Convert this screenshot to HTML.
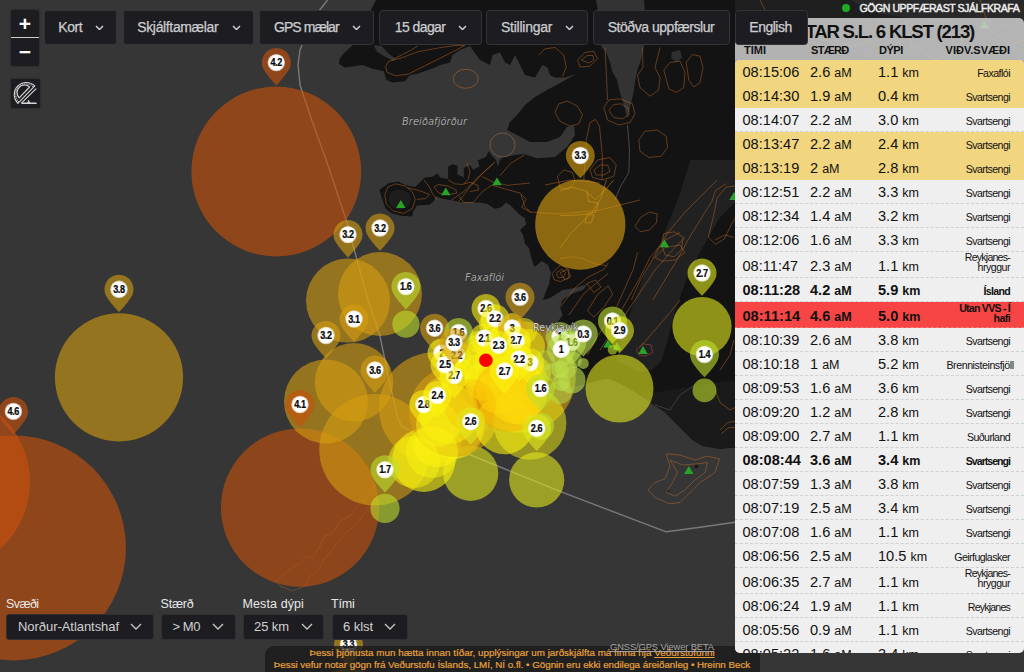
<!DOCTYPE html>
<html lang="is"><head><meta charset="utf-8"><title>Skjálftar</title>
<style>
html,body{margin:0;padding:0;}
body{width:1024px;height:672px;overflow:hidden;background:#363636;font-family:"Liberation Sans",sans-serif;position:relative;}
#map{position:absolute;left:0;top:0;width:1024px;height:672px;}
.btn{z-index:4;position:absolute;top:10px;height:35px;box-sizing:border-box;background:#1d1d21;border:1px solid #333338;border-radius:3.5px;color:#cdcdd0;font-size:14px;line-height:32px;white-space:nowrap;-webkit-text-stroke:0.25px #cdcdd0;}
.btn span{position:absolute;top:0;}
.btn svg{position:absolute;top:13.5px;}
.zoom{position:absolute;left:11px;top:10px;width:28px;height:56px;background:#1d1d21;border-radius:2px;box-shadow:0 0 2px rgba(0,0,0,.5);}
.zoom div{position:absolute;left:0;width:28px;height:28px;color:#fff;text-align:center;font-weight:bold;}
.zoom .ln{position:absolute;left:0;top:27px;width:28px;height:1px;background:#ccc;}
.meas{position:absolute;left:11px;top:79px;width:29px;height:29px;background:#1d1d21;border-radius:2px;box-shadow:0 0 2px rgba(0,0,0,.5);}
.lbl{position:absolute;top:596px;color:#e8e8e8;font-size:12.5px;line-height:16px;white-space:nowrap;}
.sel{position:absolute;top:614px;height:26px;box-sizing:border-box;background:#1d1d21;border:1px solid #2e2e33;border-radius:3px;color:#d0d0d2;font-size:13px;line-height:24px;white-space:nowrap;}
.sel span{position:absolute;top:0;}
.sel svg{position:absolute;top:8px;}
#panel{z-index:2;position:absolute;left:735px;top:18px;width:289px;height:635px;background:rgba(205,205,205,0.86);border-radius:5px;overflow:hidden;color:#111;}
#panel h2{position:absolute;margin:0;right:50px;top:1.9px;font-size:18.6px;line-height:24px;font-weight:bold;white-space:nowrap;letter-spacing:0px;}
.hd{position:absolute;top:24.9px;font-size:11px;line-height:14px;font-weight:bold;white-space:nowrap;}
#list{position:absolute;left:0;top:41.9px;width:289px;background:#efefef;border-radius:5px 5px 0 0;overflow:hidden;}
.row{position:relative;height:24px;box-sizing:border-box;border-bottom:1px dashed #d0d0d0;font-size:14.6px;line-height:24px;white-space:nowrap;}
.row.two{height:26.2px;line-height:28px;}
.row.y{background:#f2d57f;border-bottom-color:#f2d57f;}
.row.r{background:#f74545;border-bottom-color:#f77;}
.row.b{font-weight:bold;}
.row span{position:absolute;top:0;}
.row i{font-style:normal;font-size:12.5px;}
.row .t{left:7.5px;}
.row .m{left:75px;}
.row .d{left:143px;}
.row .a{right:14px;font-size:10.6px;text-align:right;top:1px;}
.row .a b{display:block;font-weight:inherit;}
.row.two .a{line-height:9.7px;top:1.1px;}
#status{position:absolute;left:859.5px;top:1.5px;font-size:10.6px;line-height:13px;color:#eee;-webkit-text-stroke:0.45px #eee;white-space:nowrap;}
#dot{position:absolute;left:842px;top:4px;width:8px;height:8px;border-radius:50%;background:#1faa1f;}
#foot{position:absolute;left:264.5px;top:645.5px;width:495px;height:40px;background:rgba(28,28,28,0.82);border-radius:9px;color:#e9a23b;font-size:9.8px;line-height:11.7px;text-align:center;white-space:nowrap;padding-top:1.7px;box-sizing:border-box;-webkit-text-stroke:0.2px #e9a23b;}
#foot u{text-decoration:underline;}
#gnss{position:absolute;left:610px;top:639.8px;font-size:9.4px;z-index:3;color:#a4a4a4;white-space:nowrap;line-height:13px;text-decoration:underline;}
</style></head><body>
<svg id="map" width="1024" height="672" viewBox="0 0 1024 672">
<rect width="1024" height="672" fill="#363636"/>
<polygon points="376,0 372,8 365,20 358,35 352,46 345,52 340,58 338.75,63.75 345,67.5 362.5,65 372.5,68.75 383.75,71.25 386.25,80 392.5,82.5 405,81.25 410,75 417.5,73.75 435,67.5 440,65 450,62.5 452.5,55 460,50 470,46 474,52 480,60 490,65 492.5,55 500,52.5 505,62.5 510,65 515,55 520,65 525,75 535,77.5 542.5,65 547.5,67.5 550,75 555,77.5 565,77.5 576,74 562,82 547,90 535,97 525,105 517,115 510,122 507,130 517,135 530,142 547,142 560,137 567,127 574,126 575,135 567,147 555,157 537,158.3 530,156 524.7,154.1 516.9,154.8 502.8,157.2 499.7,160.3 498,167 496,160 491.9,155.6 488.8,150.9 485.6,157.2 477.8,160.3 479.4,166.6 473.1,169.7 470,165 463.8,168.1 463.8,177.5 457.5,174.4 457.5,165.8 452.8,164.2 448.1,166.6 448.1,179.1 440.3,177.5 437.2,173.6 432.5,176.7 424.7,177.5 420,182.2 415.3,186.9 405.9,185.3 398.1,181.4 388.8,183 379.4,190 381.7,197.8 385.6,208.75 391.9,213.4 401.25,215.8 412.2,216.6 413,211.9 416.9,205.6 429.4,204.8 434,201 435.6,196.25 441.9,198.6 451.25,200.2 463.75,202.5 479.4,202.5 487.2,204 495,208.75 501.25,207.2 505.9,202.5 510.6,205.6 515.3,210.3 520,215 524.7,218.1 526.25,224.4 520,230 523,235 525,244 529,248 531,256.7 534.4,267 541.7,261 548,265 551,273 549,284 545,294 543,300 550,298 562.5,290 575,288 587.5,284 583,290 571,294 562.5,300 560,307 562.5,315 558,322 552,326 556,333 565,338 560,346 550,350 540,353 525,352 512,355 500,352 492,356 484,362 478,372 476,382 482,390 495,396 510,393 525,396 540,396 555,392 570,388 585,384 600,380 608.75,379 619,383 630,389 640,395.8 652.5,403 665,412.5 680,427.5 692.5,440 702.5,446 720,449 735,447.5 760,452 800,470 850,480 1024,470 1024,0" fill="#131313" />
<polygon points="596,0 600,25 601,46 606,52 610,62 612,71 617,80 620,93 624.6,107 627,118 630,107 633.5,93 635,82 637,71 641,60 644,46 646,25 644,0" fill="#333333" />
<polygon points="672,52 680,50 682,58 676,62 671,58" fill="#2f2f2f" />
<circle cx="696.5" cy="466.5" r="2" fill="#1a1a1a"/><circle cx="668" cy="491" r="1.2" fill="#1a1a1a"/>
<polygon points="690.4,160 679.3,195.7 661.4,240.4 643.6,276 632.4,307.3 621.3,338.6 616.8,360.9 640,372 652.5,369.8 661.4,360.9 668.1,338.6 674.8,311.8 686,280.5 701.6,249.3 719.5,218 737.3,200 737.3,160" fill="#212121" />
<polygon points="640,395 700,385 737,380 737,447 720,448.5 702.5,445.5 692.5,439.5 680,427 665,412 652.5,404.5" fill="#1a1a1a" />
<ellipse cx="399.7" cy="199.4" rx="11" ry="10" fill="#1e1e1e"/>
<polygon points="735,0 1024,0 1024,60 900,70 820,40 760,30 735,12" fill="#1e1e1e" />
<polygon points="850,0 1024,0 1024,30 940,22 880,14" fill="#292929" />
<polygon points="373.9,45.5 381.2,45.5 388.6,53.7 395.4,58.6 392.5,60.5 384.7,56.6 376.9,51.7" fill="#333333" />
<path d="M385.7 66.4 L387 72.2 L395.4 75.7 L408.1 74.2 L421.8 67.3 L439.4 58.6 L455 50.7 L464.8 45.5 L455 45.5 L439.4 47.8 L417.9 51.7 L402.3 57.6 L388.6 61.5 Z" fill="none" stroke="rgba(205,112,40,0.55)" stroke-width="0.8" stroke-linejoin="round"/>
<path d="M392.5 59.5 L408.1 51.7 L417.9 45.9" fill="none" stroke="rgba(205,112,40,0.55)" stroke-width="0.8" stroke-linejoin="round"/>
<ellipse cx="465.75" cy="78.75" rx="12.5" ry="9.5" transform="rotate(0 465.75 78.75)" fill="none" stroke="rgba(205,112,40,0.55)" stroke-width="0.9"/>
<ellipse cx="502.5" cy="145" rx="12.5" ry="12" transform="rotate(0 502.5 145)" fill="none" stroke="rgba(190,120,80,0.5)" stroke-width="0.9"/>
<path d="M555 112.5 L558.8 103.8 L567.5 101.2 L577.5 106.2 L582.5 115 L578.8 123.8 L570 126.2 L560 121.2 Z" fill="none" stroke="rgba(205,112,40,0.55)" stroke-width="0.8" stroke-linejoin="round"/>
<path d="M538.8 55 L545 48.8 L555 47.5 L563.8 55 L566.2 67.5 L562.5 76.2" fill="none" stroke="rgba(205,112,40,0.55)" stroke-width="0.8" stroke-linejoin="round"/>
<path d="M577.5 60 L585 52.5 L593.8 51.2 L597.5 58.8 L590 66.2 L580 67 Z" fill="none" stroke="rgba(205,112,40,0.55)" stroke-width="0.8" stroke-linejoin="round"/>
<path d="M581.2 60 L587.5 55.5 L593 55.5 L593.8 60 L588.8 63 Z" fill="none" stroke="rgba(205,112,40,0.55)" stroke-width="0.8" stroke-linejoin="round"/>
<path d="M605 47.5 L606.2 70 L607.5 100" fill="none" stroke="rgba(205,112,40,0.55)" stroke-width="0.8" stroke-linejoin="round"/>
<path d="M603.8 107.5 L608.8 100 L620 98.8 L632.5 103.8 L635 113.8 L630 122.5 L618.8 125 L607.5 120 Z" fill="none" stroke="rgba(205,112,40,0.55)" stroke-width="0.8" stroke-linejoin="round"/>
<path d="M608.8 110 L613.8 104.5 L621.2 103.8 L628.8 108.8 L628.8 115 L622.5 118.8 L613.8 117.5 Z" fill="none" stroke="rgba(205,112,40,0.55)" stroke-width="0.8" stroke-linejoin="round"/>
<path d="M583.8 180 L586.2 140 L590 122.5 L595.5 119.5 L599.5 126.2 L602.5 157.5 L602 180" fill="none" stroke="rgba(205,112,40,0.55)" stroke-width="0.8" stroke-linejoin="round"/>
<path d="M638.8 140 L645 131.2 L657.5 130 L666.2 136.2 L667.5 147.5 L661.2 156.2 L648.8 157.5 L640 151.2 Z" fill="none" stroke="rgba(205,112,40,0.55)" stroke-width="0.8" stroke-linejoin="round"/>
<path d="M642.5 47.5 L643 67.5 L637.5 75 L640 87.5 L650 96.2 L658.8 90 L660 77.5 L655 67.5 L660 47.5" fill="none" stroke="rgba(205,112,40,0.55)" stroke-width="0.8" stroke-linejoin="round"/>
<path d="M663.8 70 L670 62.5 L680 61.2 L685 72.5 L683.8 87.5 L676.2 92.5 L668.8 88.8 Z" fill="none" stroke="rgba(205,112,40,0.55)" stroke-width="0.8" stroke-linejoin="round"/>
<path d="M686.2 62.5 L692.5 54.5 L700 56.2 L703 67.5 L700 82.5 L693.8 87 L688.8 80 Z" fill="none" stroke="rgba(205,112,40,0.55)" stroke-width="0.8" stroke-linejoin="round"/>
<path d="M590 170 L597.5 160 L610 157.5 L616.2 165 L613.8 176.2 L602.5 180 L592.5 177.5 Z" fill="none" stroke="rgba(205,112,40,0.55)" stroke-width="0.8" stroke-linejoin="round"/>
<path d="M593.8 170 L600 165 L607.5 165 L610 171.2 L603.8 175 L596.2 175 Z" fill="none" stroke="rgba(205,112,40,0.55)" stroke-width="0.8" stroke-linejoin="round"/>
<path d="M557.5 176.2 L563.8 170 L572.5 172.5 L575 181.2 L568.8 190 L560 187.5 Z" fill="none" stroke="rgba(205,112,40,0.55)" stroke-width="0.8" stroke-linejoin="round"/>
<path d="M627.5 125 L629.5 150 L628.8 172.5 L620 187.5 L615 200" fill="none" stroke="rgba(170,170,170,0.45)" stroke-width="0.8" stroke-linejoin="round"/>
<path d="M384.8 194.7 L388 186.9 L395.8 183.8 L405.2 186.1 L412.2 191.6 L415.3 199.4 L412.2 208.8 L403.6 213.4 L393.4 211.1 L386.4 204.1 Z" fill="none" stroke="rgba(205,112,40,0.55)" stroke-width="0.8" stroke-linejoin="round"/>
<path d="M407.5 187.7 L416.9 190 L423.9 192.3 L429.4 194.7 L425.5 198.6 L416.9 199.4" fill="none" stroke="rgba(205,112,40,0.55)" stroke-width="0.8" stroke-linejoin="round"/>
<path d="M423.9 179.8 L429.4 186.9 L432.5 193.9 L437.2 199.4" fill="none" stroke="rgba(205,112,40,0.55)" stroke-width="0.8" stroke-linejoin="round"/>
<path d="M434.1 186.9 L438.8 184.5 L448.1 186.1 L455.9 190 L456.7 193.1 L448.1 194.7 L438.8 193.1 Z" fill="none" stroke="rgba(205,112,40,0.55)" stroke-width="0.8" stroke-linejoin="round"/>
<path d="M448.1 179.8 L454.4 183.8 L462.2 184.5 L470 182.2 L477.8 185.3 L478.6 190 L470 191.6" fill="none" stroke="rgba(205,112,40,0.55)" stroke-width="0.8" stroke-linejoin="round"/>
<path d="M459.1 200.9 L470 186.9 L482.5 173.6 L495 161.9" fill="none" stroke="rgba(205,112,40,0.55)" stroke-width="0.8" stroke-linejoin="round"/>
<path d="M451.2 200.2 L463.8 191.6 L477.8 177.5 L493.4 163.4" fill="none" stroke="rgba(205,112,40,0.55)" stroke-width="0.8" stroke-linejoin="round"/>
<path d="M459.1 196.2 L463.8 202.5 L473.1 202.5 L482.5 191.6 L491.9 185.3 L520 193.1 L526.2 199.4 L521.6 207.2 L530 211.9" fill="none" stroke="rgba(205,112,40,0.55)" stroke-width="0.8" stroke-linejoin="round"/>
<path d="M482.5 176.7 L493.4 182.2 L507.5 185.3 L530 183" fill="none" stroke="rgba(205,112,40,0.55)" stroke-width="0.8" stroke-linejoin="round"/>
<path d="M499.7 175.9 L510.6 163.4 L524.7 154.8" fill="none" stroke="rgba(205,112,40,0.55)" stroke-width="0.8" stroke-linejoin="round"/>
<path d="M466.9 163.4 L470 171.2 L468.4 179.1 L463.8 183.8" fill="none" stroke="rgba(205,112,40,0.55)" stroke-width="0.8" stroke-linejoin="round"/>
<path d="M530 212 L560 214 L600 210 L640 200" fill="none" stroke="rgba(205,112,40,0.55)" stroke-width="0.8" stroke-linejoin="round"/>
<path d="M545 185 L570 180 L600 183" fill="none" stroke="rgba(205,112,40,0.55)" stroke-width="0.8" stroke-linejoin="round"/>
<path d="M560 190.7 L570.7 187.1 L585 190.7 L595.7 199.6 L604.6 190.7 L613.6 180" fill="none" stroke="rgba(230,150,50,0.6)" stroke-width="0.8" stroke-linejoin="round"/>
<path d="M560 215.7 L581.4 214.8 L595.7 212.1 L598.4 203.2 L588.6 201.4 L586.8 190.7" fill="none" stroke="rgba(230,150,50,0.6)" stroke-width="0.8" stroke-linejoin="round"/>
<path d="M560 247.9 L570.7 233.6 L583.2 221.1 L592.1 212.1 L601.1 197.9 L606.4 180" fill="none" stroke="rgba(230,150,50,0.6)" stroke-width="0.8" stroke-linejoin="round"/>
<path d="M586.8 214.8 L593.9 214.8 L591.2 222.9 L585 222.9 Z" fill="none" stroke="rgba(230,150,50,0.6)" stroke-width="0.8" stroke-linejoin="round"/>
<path d="M635 226.4 L640.4 217.5 L649.3 212.1 L657.3 213.9 L656.4 222.9 L649.3 230 L640.4 231.8 Z" fill="none" stroke="rgba(205,112,40,0.55)" stroke-width="0.8" stroke-linejoin="round"/>
<path d="M631.4 300 L640.4 280 L652.9 258.6 L667.1 233.6 L685 212.1 L702.9 194.3 L717.1 180" fill="none" stroke="rgba(205,112,40,0.55)" stroke-width="0.8" stroke-linejoin="round"/>
<path d="M652.9 300 L667.1 276.4 L677.9 258.6 L688.6 238.9 L702.9 215.7 L711.8 201.4 L715.4 190.7 L726.1 183.6" fill="none" stroke="rgba(205,112,40,0.55)" stroke-width="0.8" stroke-linejoin="round"/>
<path d="M663.6 233.6 L674.3 231.8 L683.2 237.1 L681.4 249.6 L674.3 256.8 L665.4 255 L661.8 246.1 Z" fill="none" stroke="rgba(205,112,40,0.55)" stroke-width="0.8" stroke-linejoin="round"/>
<path d="M708.2 237.1 L713.6 215.7 L717.1 197.9 L726.1 187.1 L738.6 185.4" fill="none" stroke="rgba(205,112,40,0.55)" stroke-width="0.8" stroke-linejoin="round"/>
<path d="M708.2 237.1 L715.4 244.3 L724.3 238.9 L731.4 224.6 L738.6 212.1" fill="none" stroke="rgba(205,112,40,0.55)" stroke-width="0.8" stroke-linejoin="round"/>
<path d="M560 258.6 L570.7 256.8 L583.2 258.6 L595.7 263.9 L606.4 265.7" fill="none" stroke="rgba(205,112,40,0.55)" stroke-width="0.8" stroke-linejoin="round"/>
<path d="M560 272.9 L567.1 269.3 L570.7 276.4 L565.4 280 Z" fill="none" stroke="rgba(205,112,40,0.55)" stroke-width="0.8" stroke-linejoin="round"/>
<path d="M586.8 283.6 L595.7 280 L601.1 287.1 L593.9 292.5 Z" fill="none" stroke="rgba(205,112,40,0.55)" stroke-width="0.8" stroke-linejoin="round"/>
<path d="M552.1 273.3 L560.4 265 L568.8 269.2 L568.8 277.5 L560.4 281.7 L554.2 279.6 Z" fill="none" stroke="rgba(205,112,40,0.55)" stroke-width="0.8" stroke-linejoin="round"/>
<path d="M556.2 273.3 L561.5 269.2 L565.6 272.3 L563.5 277.5 L558.3 277.5 Z" fill="none" stroke="rgba(205,112,40,0.55)" stroke-width="0.8" stroke-linejoin="round"/>
<path d="M560.4 306.7 L575 287.9 L587.5 277.5 L604.2 269.2 L608.3 262.9" fill="none" stroke="rgba(205,112,40,0.55)" stroke-width="0.8" stroke-linejoin="round"/>
<path d="M568.8 315 L583.3 294.2 L597.9 281.7 L608.3 273.3" fill="none" stroke="rgba(205,112,40,0.55)" stroke-width="0.8" stroke-linejoin="round"/>
<path d="M587.5 310.8 L597.9 294.2 L608.3 285.8 L612.5 294.2 L604.2 306.7 L593.8 317.1 Z" fill="none" stroke="rgba(205,112,40,0.55)" stroke-width="0.8" stroke-linejoin="round"/>
<path d="M616.7 306.7 L625 287.9 L633.3 269.2 L637.5 252.5" fill="none" stroke="rgba(205,112,40,0.55)" stroke-width="0.8" stroke-linejoin="round"/>
<path d="M520.8 194.2 L525 206.7 L531.2 212.9" fill="none" stroke="rgba(205,112,40,0.55)" stroke-width="0.8" stroke-linejoin="round"/>
<path d="M620 312.5 L630 295 L640 277.5 L650 257.5 L665 240 L680 232.5" fill="none" stroke="rgba(205,112,40,0.55)" stroke-width="0.8" stroke-linejoin="round"/>
<path d="M625 315 L640 292.5 L655 270 L672.5 250 L685 237.5" fill="none" stroke="rgba(205,112,40,0.55)" stroke-width="0.8" stroke-linejoin="round"/>
<path d="M655 257.5 L665 247.5 L680 245 L685 252.5 L675 260 L662.5 261.2 Z" fill="none" stroke="rgba(205,112,40,0.55)" stroke-width="0.8" stroke-linejoin="round"/>
<path d="M636.2 350 L642.5 343.8 L651.2 345 L652.5 352.5 L645 356.2 L638.8 355 Z" fill="none" stroke="rgba(200,80,80,0.6)" stroke-width="0.8" stroke-linejoin="round"/>
<path d="M600 350 L610 335 L620 325 L625 315" fill="none" stroke="rgba(205,112,40,0.55)" stroke-width="0.8" stroke-linejoin="round"/>
<path d="M587.5 355 L595 340 L605 325" fill="none" stroke="rgba(205,112,40,0.55)" stroke-width="0.8" stroke-linejoin="round"/>
<path d="M640 347.5 L655 330 L670 312.5 L680 300" fill="none" stroke="rgba(205,112,40,0.55)" stroke-width="0.8" stroke-linejoin="round"/>
<path d="M720 370 L730 355 L733.8 340" fill="none" stroke="rgba(205,112,40,0.55)" stroke-width="0.8" stroke-linejoin="round"/>
<path d="M715 240 L725 235 L733.8 237.5" fill="none" stroke="rgba(205,112,40,0.55)" stroke-width="0.8" stroke-linejoin="round"/>
<path d="M715 390 L720 402.5 L730 410 L735 407.5" fill="none" stroke="rgba(205,112,40,0.55)" stroke-width="0.8" stroke-linejoin="round"/>
<path d="M720 430 L727.5 422.5 L735 421.2" fill="none" stroke="rgba(205,112,40,0.55)" stroke-width="0.8" stroke-linejoin="round"/>
<path d="M721.2 433.8 L728.8 427.5 L735 427.5" fill="none" stroke="rgba(205,112,40,0.55)" stroke-width="0.8" stroke-linejoin="round"/>
<path d="M655 405 L670 410 L680 395 L695 385" fill="none" stroke="rgba(110,110,110,0.5)" stroke-width="0.8" stroke-linejoin="round"/>
<path d="M666.2 453.8 L680 455 L695 460 L707.5 456.2 L719.5 458.8 L715 472.5 L700 482.5 L690 492.5 L680 502.5 L670 503.8 L655 497.5 L648 490 L655 482.5 L665 478.8 L670 466.2 Z" fill="none" stroke="rgba(205,112,40,0.55)" stroke-width="0.8" stroke-linejoin="round"/>
<path d="M670 460 L682.5 465 L697.5 463.8 L707.5 462.5 L705 472.5 L695 480 L685 490 L675 496.2 L666.2 492.5 L672.5 482.5 L677.5 472.5 Z" fill="none" stroke="rgba(205,112,40,0.55)" stroke-width="0.8" stroke-linejoin="round"/>
<path d="M276 581 L287.5 571 L300 563.5 L306 556 L312.5 558.5 L320 546 L325 536 L332.5 533.5 L340 521 L350 516 L357.5 506 L367.5 496 L375 485 L372.5 501 L362.5 516 L355 526 L345 533.5 L335 546 L325 558.5 L317.5 571 L310 576 L305 586 L292.5 591 L280 586 Z" fill="none" stroke="rgba(200,120,60,0.4)" stroke-width="0.8" stroke-linejoin="round"/>
<path d="M760 0 L770 20 L800 40 L840 50 L870 40 L880 20" fill="none" stroke="rgba(205,112,40,0.55)" stroke-width="0.8" stroke-linejoin="round"/>
<path d="M905 20 L912 45 L935 60 L960 50 L965 25" fill="none" stroke="rgba(205,112,40,0.55)" stroke-width="0.8" stroke-linejoin="round"/>
<path d="M980 0 L990 30 L1010 45 L1024 40" fill="none" stroke="rgba(205,112,40,0.55)" stroke-width="0.8" stroke-linejoin="round"/>
<path d="M327.5 0 L312 20 L300 50 L298 65 L300 85 L310.7 117 L328.6 167 L346.4 220.7 L357 260 L368 300 L380 336 L389 380 L397.8 418.4 L402 427 L464.8 452.7 L500 467 L563.2 492.7 L666.3 531.8 L700 527.2 L735 522.3" fill="none" stroke="rgba(215,215,215,0.42)" stroke-width="1.4" stroke-linejoin="round"/>
<polygon points="400.8,200.1 396.1,207.9 405.5,207.9" fill="#27a427"/>
<polygon points="445.8,187.4 441.1,195.2 450.5,195.2" fill="#27a427"/>
<polygon points="497,177.5 492.3,185.3 501.7,185.3" fill="#27a427"/>
<polygon points="664.5,239.5 659.8,247.3 669.2,247.3" fill="#27a427"/>
<polygon points="734,192.1 729.3,199.9 738.7,199.9" fill="#27a427"/>
<polygon points="608,339.6 603.3,347.4 612.7,347.4" fill="#27a427"/>
<polygon points="617,342.1 612.3,349.9 621.7,349.9" fill="#27a427"/>
<polygon points="643,346.1 638.3,353.9 647.7,353.9" fill="#27a427"/>
<polygon points="688.8,466.1 684.1,473.9 693.5,473.9" fill="#27a427"/>
<polygon points="984.5,20.6 979.8,28.4 989.2,28.4" fill="#27a427"/>
<text x="402" y="125" font-family="DejaVu Sans, Liberation Sans, sans-serif" font-style="italic" font-size="9.8" letter-spacing="0.1" fill="#a8a8a8" stroke="#222" stroke-width="0.6" paint-order="stroke">Breiðafjörður</text>
<text x="465" y="280.5" font-family="DejaVu Sans, Liberation Sans, sans-serif" font-style="italic" font-size="9.8" letter-spacing="0.1" fill="#a8a8a8" stroke="#222" stroke-width="0.6" paint-order="stroke">Faxaflói</text>
<circle cx="-60" cy="482" r="90" fill="rgba(235,85,5,0.5)"/>
<circle cx="13.4" cy="547.9" r="112.5" fill="rgba(200,80,12,0.62)"/>
<circle cx="276.3" cy="171.5" r="84.9" fill="rgba(200,80,12,0.62)"/>
<circle cx="300" cy="507.6" r="79.1" fill="rgba(200,80,12,0.6)"/>
<circle cx="119" cy="377.4" r="64.1" fill="rgba(214,158,16,0.6)"/>
<circle cx="348" cy="300.6" r="42.0" fill="rgba(214,158,16,0.6)"/>
<circle cx="380" cy="294.0" r="42.0" fill="rgba(214,158,16,0.6)"/>
<circle cx="326" cy="401.5" r="42.0" fill="rgba(214,158,16,0.6)"/>
<circle cx="354" cy="382.2" r="39.2" fill="rgba(214,158,16,0.6)"/>
<circle cx="580.3" cy="224.6" r="45.1" fill="rgba(214,158,16,0.62)"/>
<circle cx="375" cy="449.7" r="55.7" fill="rgba(214,158,16,0.6)"/>
<circle cx="434.6" cy="407.9" r="55.7" fill="rgba(214,158,16,0.6)"/>
<circle cx="520" cy="377.0" r="55.7" fill="rgba(214,158,16,0.6)"/>
<circle cx="702" cy="326.6" r="29.6" fill="rgba(225,232,28,0.6)"/>
<circle cx="704.5" cy="390.4" r="11.9" fill="rgba(190,222,45,0.6)"/>
<circle cx="612.5" cy="349.8" r="4.8" fill="rgba(190,222,45,0.6)"/>
<circle cx="619.5" cy="388.5" r="34.0" fill="rgba(225,232,28,0.6)"/>
<circle cx="405.9" cy="324.2" r="13.6" fill="rgba(190,222,45,0.6)"/>
<circle cx="385" cy="508.4" r="14.6" fill="rgba(190,222,45,0.6)"/>
<circle cx="470.7" cy="473.3" r="27.6" fill="rgba(225,232,28,0.6)"/>
<circle cx="458.6" cy="370.1" r="13.6" fill="rgba(190,222,45,0.6)"/>
<circle cx="442" cy="395.1" r="18.1" fill="rgba(250,242,15,0.6)"/>
<circle cx="456.6" cy="399.8" r="20.8" fill="rgba(250,242,15,0.6)"/>
<circle cx="529.9" cy="423.3" r="36.5" fill="rgba(250,242,15,0.5)"/>
<circle cx="560" cy="369.3" r="8.9" fill="rgba(188,224,75,0.6)"/>
<circle cx="571.9" cy="379.9" r="13.6" fill="rgba(188,224,75,0.6)"/>
<circle cx="423.8" cy="460.2" r="31.7" fill="rgba(250,242,15,0.6)"/>
<circle cx="437.4" cy="443.4" r="23.9" fill="rgba(250,242,15,0.6)"/>
<circle cx="454.1" cy="429.1" r="29.6" fill="rgba(250,242,15,0.6)"/>
<circle cx="445" cy="414.4" r="25.7" fill="rgba(250,242,15,0.6)"/>
<circle cx="454.1" cy="411.8" r="45.1" fill="rgba(214,158,16,0.6)"/>
<circle cx="486" cy="360.1" r="27.6" fill="rgba(250,242,15,0.6)"/>
<circle cx="495.1" cy="363.6" r="20.8" fill="rgba(250,242,15,0.6)"/>
<circle cx="512.3" cy="388.5" r="36.5" fill="rgba(214,158,16,0.5)"/>
<circle cx="484.4" cy="381.4" r="19.4" fill="rgba(250,242,15,0.6)"/>
<circle cx="516.2" cy="394.3" r="29.6" fill="rgba(250,242,15,0.6)"/>
<circle cx="498.6" cy="391.5" r="22.3" fill="rgba(250,242,15,0.6)"/>
<circle cx="519.1" cy="403.7" r="20.8" fill="rgba(250,242,15,0.6)"/>
<circle cx="504.5" cy="424.6" r="29.6" fill="rgba(250,242,15,0.6)"/>
<circle cx="540.5" cy="426.1" r="13.6" fill="rgba(190,222,45,0.6)"/>
<circle cx="536.7" cy="479.9" r="27.6" fill="rgba(225,232,28,0.6)"/>
<circle cx="583.3" cy="363.4" r="5.5" fill="rgba(188,224,75,0.6)"/>
<circle cx="348.5" cy="713.6" r="45.1" fill="rgba(214,158,16,0.6)"/>
<circle cx="561.2" cy="382.2" r="8.9" fill="rgba(188,224,75,0.6)"/>
<circle cx="490" cy="324" r="11" fill="rgba(250,242,15,0.5)"/>
<circle cx="503" cy="334" r="12" fill="rgba(250,242,15,0.5)"/>
<circle cx="519" cy="345" r="12" fill="rgba(250,242,15,0.5)"/>
<circle cx="478" cy="342" r="11" fill="rgba(250,242,15,0.5)"/>
<circle cx="512" cy="322" r="9" fill="rgba(250,242,15,0.5)"/>
<circle cx="483" cy="372" r="20" fill="rgba(250,242,15,0.5)"/>
<circle cx="521" cy="376" r="25" fill="rgba(250,242,15,0.5)"/>
<circle cx="528" cy="346" r="17" fill="rgba(250,242,15,0.5)"/>
<circle cx="524" cy="331" r="13" fill="rgba(250,242,15,0.5)"/>
<circle cx="476" cy="355" r="14" fill="rgba(250,242,15,0.5)"/>
<circle cx="505" cy="360" r="16" fill="rgba(250,242,15,0.5)"/>
<circle cx="535" cy="372" r="16" fill="rgba(250,242,15,0.5)"/>
<circle cx="449" cy="414" r="30" fill="rgba(250,242,15,0.5)"/>
<circle cx="438" cy="425" r="22" fill="rgba(250,242,15,0.5)"/>
<circle cx="414" cy="462" r="26" fill="rgba(250,242,15,0.5)"/>
<circle cx="432" cy="452" r="26" fill="rgba(250,242,15,0.5)"/>
<circle cx="520" cy="392" r="28" fill="rgba(250,242,15,0.5)"/>
<circle cx="545" cy="360" r="10" fill="rgba(188,224,75,0.5)"/>
<circle cx="552" cy="372" r="9" fill="rgba(188,224,75,0.5)"/>
<circle cx="566" cy="368" r="11" fill="rgba(188,224,75,0.5)"/>
<circle cx="574" cy="360" r="8" fill="rgba(188,224,75,0.5)"/>
<circle cx="560" cy="392" r="12" fill="rgba(188,224,75,0.5)"/>
<circle cx="509" cy="396" r="36" fill="rgba(255,150,0,0.28)"/>
<circle cx="470" cy="405" r="26" fill="rgba(255,150,0,0.16)"/>
<g transform="translate(13.4,411.4)"><path d="M0 22.8 Q-9.5 13 -13.2 6 A14.5 14.5 0 1 1 13.2 6 Q9.5 13 0 22.8 Z" fill="rgba(200,80,12,0.62)"/><circle r="8.7" fill="#fff" fill-opacity="0.7"/><circle r="7.7" fill="#fff"/><text y="3.6" x="-0.2" transform="scale(0.88,1)" text-anchor="middle" font-family="Liberation Sans, sans-serif" font-weight="bold" font-size="10.3" letter-spacing="-0.45" fill="#080808" stroke="#080808" stroke-width="0.25">4.6</text></g>
<g transform="translate(276.3,62.6)"><path d="M0 22.8 Q-9.5 13 -13.2 6 A14.5 14.5 0 1 1 13.2 6 Q9.5 13 0 22.8 Z" fill="rgba(200,80,12,0.62)"/><circle r="8.7" fill="#fff" fill-opacity="0.7"/><circle r="7.7" fill="#fff"/><text y="3.6" x="-0.2" transform="scale(0.88,1)" text-anchor="middle" font-family="Liberation Sans, sans-serif" font-weight="bold" font-size="10.3" letter-spacing="-0.45" fill="#080808" stroke="#080808" stroke-width="0.25">4.2</text></g>
<g transform="translate(300,404.5)"><path d="M0 22.8 Q-9.5 13 -13.2 6 A14.5 14.5 0 1 1 13.2 6 Q9.5 13 0 22.8 Z" fill="rgba(200,80,12,0.6)"/><circle r="8.7" fill="#fff" fill-opacity="0.7"/><circle r="7.7" fill="#fff"/><text y="3.6" x="-0.2" transform="scale(0.88,1)" text-anchor="middle" font-family="Liberation Sans, sans-serif" font-weight="bold" font-size="10.3" letter-spacing="-0.45" fill="#080808" stroke="#080808" stroke-width="0.25">4.1</text></g>
<g transform="translate(119,289.3)"><path d="M0 22.8 Q-9.5 13 -13.2 6 A14.5 14.5 0 1 1 13.2 6 Q9.5 13 0 22.8 Z" fill="rgba(214,158,16,0.6)"/><circle r="8.7" fill="#fff" fill-opacity="0.7"/><circle r="7.7" fill="#fff"/><text y="3.6" x="-0.2" transform="scale(0.88,1)" text-anchor="middle" font-family="Liberation Sans, sans-serif" font-weight="bold" font-size="10.3" letter-spacing="-0.45" fill="#080808" stroke="#080808" stroke-width="0.25">3.8</text></g>
<g transform="translate(348,234.6)"><path d="M0 22.8 Q-9.5 13 -13.2 6 A14.5 14.5 0 1 1 13.2 6 Q9.5 13 0 22.8 Z" fill="rgba(214,158,16,0.6)"/><circle r="8.7" fill="#fff" fill-opacity="0.7"/><circle r="7.7" fill="#fff"/><text y="3.6" x="-0.2" transform="scale(0.88,1)" text-anchor="middle" font-family="Liberation Sans, sans-serif" font-weight="bold" font-size="10.3" letter-spacing="-0.45" fill="#080808" stroke="#080808" stroke-width="0.25">3.2</text></g>
<g transform="translate(380,228)"><path d="M0 22.8 Q-9.5 13 -13.2 6 A14.5 14.5 0 1 1 13.2 6 Q9.5 13 0 22.8 Z" fill="rgba(214,158,16,0.6)"/><circle r="8.7" fill="#fff" fill-opacity="0.7"/><circle r="7.7" fill="#fff"/><text y="3.6" x="-0.2" transform="scale(0.88,1)" text-anchor="middle" font-family="Liberation Sans, sans-serif" font-weight="bold" font-size="10.3" letter-spacing="-0.45" fill="#080808" stroke="#080808" stroke-width="0.25">3.2</text></g>
<g transform="translate(326,335.5)"><path d="M0 22.8 Q-9.5 13 -13.2 6 A14.5 14.5 0 1 1 13.2 6 Q9.5 13 0 22.8 Z" fill="rgba(214,158,16,0.6)"/><circle r="8.7" fill="#fff" fill-opacity="0.7"/><circle r="7.7" fill="#fff"/><text y="3.6" x="-0.2" transform="scale(0.88,1)" text-anchor="middle" font-family="Liberation Sans, sans-serif" font-weight="bold" font-size="10.3" letter-spacing="-0.45" fill="#080808" stroke="#080808" stroke-width="0.25">3.2</text></g>
<g transform="translate(354,319)"><path d="M0 22.8 Q-9.5 13 -13.2 6 A14.5 14.5 0 1 1 13.2 6 Q9.5 13 0 22.8 Z" fill="rgba(214,158,16,0.6)"/><circle r="8.7" fill="#fff" fill-opacity="0.7"/><circle r="7.7" fill="#fff"/><text y="3.6" x="-0.2" transform="scale(0.88,1)" text-anchor="middle" font-family="Liberation Sans, sans-serif" font-weight="bold" font-size="10.3" letter-spacing="-0.45" fill="#080808" stroke="#080808" stroke-width="0.25">3.1</text></g>
<g transform="translate(580.3,155.5)"><path d="M0 22.8 Q-9.5 13 -13.2 6 A14.5 14.5 0 1 1 13.2 6 Q9.5 13 0 22.8 Z" fill="rgba(214,158,16,0.62)"/><circle r="8.7" fill="#fff" fill-opacity="0.7"/><circle r="7.7" fill="#fff"/><text y="3.6" x="-0.2" transform="scale(0.88,1)" text-anchor="middle" font-family="Liberation Sans, sans-serif" font-weight="bold" font-size="10.3" letter-spacing="-0.45" fill="#080808" stroke="#080808" stroke-width="0.25">3.3</text></g>
<g transform="translate(375,370)"><path d="M0 22.8 Q-9.5 13 -13.2 6 A14.5 14.5 0 1 1 13.2 6 Q9.5 13 0 22.8 Z" fill="rgba(214,158,16,0.6)"/><circle r="8.7" fill="#fff" fill-opacity="0.7"/><circle r="7.7" fill="#fff"/><text y="3.6" x="-0.2" transform="scale(0.88,1)" text-anchor="middle" font-family="Liberation Sans, sans-serif" font-weight="bold" font-size="10.3" letter-spacing="-0.45" fill="#080808" stroke="#080808" stroke-width="0.25">3.6</text></g>
<g transform="translate(434.6,328.2)"><path d="M0 22.8 Q-9.5 13 -13.2 6 A14.5 14.5 0 1 1 13.2 6 Q9.5 13 0 22.8 Z" fill="rgba(214,158,16,0.6)"/><circle r="8.7" fill="#fff" fill-opacity="0.7"/><circle r="7.7" fill="#fff"/><text y="3.6" x="-0.2" transform="scale(0.88,1)" text-anchor="middle" font-family="Liberation Sans, sans-serif" font-weight="bold" font-size="10.3" letter-spacing="-0.45" fill="#080808" stroke="#080808" stroke-width="0.25">3.6</text></g>
<g transform="translate(520,297.3)"><path d="M0 22.8 Q-9.5 13 -13.2 6 A14.5 14.5 0 1 1 13.2 6 Q9.5 13 0 22.8 Z" fill="rgba(214,158,16,0.6)"/><circle r="8.7" fill="#fff" fill-opacity="0.7"/><circle r="7.7" fill="#fff"/><text y="3.6" x="-0.2" transform="scale(0.88,1)" text-anchor="middle" font-family="Liberation Sans, sans-serif" font-weight="bold" font-size="10.3" letter-spacing="-0.45" fill="#080808" stroke="#080808" stroke-width="0.25">3.6</text></g>
<g transform="translate(702,273)"><path d="M0 22.8 Q-9.5 13 -13.2 6 A14.5 14.5 0 1 1 13.2 6 Q9.5 13 0 22.8 Z" fill="rgba(225,232,28,0.6)"/><circle r="8.7" fill="#fff" fill-opacity="0.7"/><circle r="7.7" fill="#fff"/><text y="3.6" x="-0.2" transform="scale(0.88,1)" text-anchor="middle" font-family="Liberation Sans, sans-serif" font-weight="bold" font-size="10.3" letter-spacing="-0.45" fill="#080808" stroke="#080808" stroke-width="0.25">2.7</text></g>
<g transform="translate(704.5,354.5)"><path d="M0 22.8 Q-9.5 13 -13.2 6 A14.5 14.5 0 1 1 13.2 6 Q9.5 13 0 22.8 Z" fill="rgba(190,222,45,0.6)"/><circle r="8.7" fill="#fff" fill-opacity="0.7"/><circle r="7.7" fill="#fff"/><text y="3.6" x="-0.2" transform="scale(0.88,1)" text-anchor="middle" font-family="Liberation Sans, sans-serif" font-weight="bold" font-size="10.3" letter-spacing="-0.45" fill="#080808" stroke="#080808" stroke-width="0.25">1.4</text></g>
<g transform="translate(612.5,321)"><path d="M0 22.8 Q-9.5 13 -13.2 6 A14.5 14.5 0 1 1 13.2 6 Q9.5 13 0 22.8 Z" fill="rgba(190,222,45,0.6)"/><circle r="8.7" fill="#fff" fill-opacity="0.7"/><circle r="7.7" fill="#fff"/><text y="3.6" x="-0.2" transform="scale(0.88,1)" text-anchor="middle" font-family="Liberation Sans, sans-serif" font-weight="bold" font-size="10.3" letter-spacing="-0.45" fill="#080808" stroke="#080808" stroke-width="0.25">0.1</text></g>
<g transform="translate(619.5,330.5)"><path d="M0 22.8 Q-9.5 13 -13.2 6 A14.5 14.5 0 1 1 13.2 6 Q9.5 13 0 22.8 Z" fill="rgba(225,232,28,0.6)"/><circle r="8.7" fill="#fff" fill-opacity="0.7"/><circle r="7.7" fill="#fff"/><text y="3.6" x="-0.2" transform="scale(0.88,1)" text-anchor="middle" font-family="Liberation Sans, sans-serif" font-weight="bold" font-size="10.3" letter-spacing="-0.45" fill="#080808" stroke="#080808" stroke-width="0.25">2.9</text></g>
<g transform="translate(405.9,286.6)"><path d="M0 22.8 Q-9.5 13 -13.2 6 A14.5 14.5 0 1 1 13.2 6 Q9.5 13 0 22.8 Z" fill="rgba(190,222,45,0.6)"/><circle r="8.7" fill="#fff" fill-opacity="0.7"/><circle r="7.7" fill="#fff"/><text y="3.6" x="-0.2" transform="scale(0.88,1)" text-anchor="middle" font-family="Liberation Sans, sans-serif" font-weight="bold" font-size="10.3" letter-spacing="-0.45" fill="#080808" stroke="#080808" stroke-width="0.25">1.6</text></g>
<g transform="translate(385,469.8)"><path d="M0 22.8 Q-9.5 13 -13.2 6 A14.5 14.5 0 1 1 13.2 6 Q9.5 13 0 22.8 Z" fill="rgba(190,222,45,0.6)"/><circle r="8.7" fill="#fff" fill-opacity="0.7"/><circle r="7.7" fill="#fff"/><text y="3.6" x="-0.2" transform="scale(0.88,1)" text-anchor="middle" font-family="Liberation Sans, sans-serif" font-weight="bold" font-size="10.3" letter-spacing="-0.45" fill="#080808" stroke="#080808" stroke-width="0.25">1.7</text></g>
<g transform="translate(470.7,421.7)"><path d="M0 22.8 Q-9.5 13 -13.2 6 A14.5 14.5 0 1 1 13.2 6 Q9.5 13 0 22.8 Z" fill="rgba(225,232,28,0.6)"/><circle r="8.7" fill="#fff" fill-opacity="0.7"/><circle r="7.7" fill="#fff"/><text y="3.6" x="-0.2" transform="scale(0.88,1)" text-anchor="middle" font-family="Liberation Sans, sans-serif" font-weight="bold" font-size="10.3" letter-spacing="-0.45" fill="#080808" stroke="#080808" stroke-width="0.25">2.6</text></g>
<g transform="translate(458.6,332.5)"><path d="M0 22.8 Q-9.5 13 -13.2 6 A14.5 14.5 0 1 1 13.2 6 Q9.5 13 0 22.8 Z" fill="rgba(190,222,45,0.6)"/><circle r="8.7" fill="#fff" fill-opacity="0.7"/><circle r="7.7" fill="#fff"/><text y="3.6" x="-0.2" transform="scale(0.88,1)" text-anchor="middle" font-family="Liberation Sans, sans-serif" font-weight="bold" font-size="10.3" letter-spacing="-0.45" fill="#080808" stroke="#080808" stroke-width="0.25">1.6</text></g>
<g transform="translate(442,353)"><path d="M0 22.8 Q-9.5 13 -13.2 6 A14.5 14.5 0 1 1 13.2 6 Q9.5 13 0 22.8 Z" fill="rgba(250,242,15,0.6)"/><circle r="8.7" fill="#fff" fill-opacity="0.7"/><circle r="7.7" fill="#fff"/><text y="3.6" x="-0.2" transform="scale(0.88,1)" text-anchor="middle" font-family="Liberation Sans, sans-serif" font-weight="bold" font-size="10.3" letter-spacing="-0.45" fill="#080808" stroke="#080808" stroke-width="0.25">2</text></g>
<g transform="translate(456.6,355)"><path d="M0 22.8 Q-9.5 13 -13.2 6 A14.5 14.5 0 1 1 13.2 6 Q9.5 13 0 22.8 Z" fill="rgba(250,242,15,0.6)"/><circle r="8.7" fill="#fff" fill-opacity="0.7"/><circle r="7.7" fill="#fff"/><text y="3.6" x="-0.2" transform="scale(0.88,1)" text-anchor="middle" font-family="Liberation Sans, sans-serif" font-weight="bold" font-size="10.3" letter-spacing="-0.45" fill="#080808" stroke="#080808" stroke-width="0.25">2.2</text></g>
<g transform="translate(529.9,362.8)"><path d="M0 22.8 Q-9.5 13 -13.2 6 A14.5 14.5 0 1 1 13.2 6 Q9.5 13 0 22.8 Z" fill="rgba(250,242,15,0.5)"/><circle r="8.7" fill="#fff" fill-opacity="0.7"/><circle r="7.7" fill="#fff"/><text y="3.6" x="-0.2" transform="scale(0.88,1)" text-anchor="middle" font-family="Liberation Sans, sans-serif" font-weight="bold" font-size="10.3" letter-spacing="-0.45" fill="#080808" stroke="#080808" stroke-width="0.25">3</text></g>
<g transform="translate(560,336.4)"><path d="M0 22.8 Q-9.5 13 -13.2 6 A14.5 14.5 0 1 1 13.2 6 Q9.5 13 0 22.8 Z" fill="rgba(188,224,75,0.6)"/><circle r="8.7" fill="#fff" fill-opacity="0.7"/><circle r="7.7" fill="#fff"/><text y="3.6" x="-0.2" transform="scale(0.88,1)" text-anchor="middle" font-family="Liberation Sans, sans-serif" font-weight="bold" font-size="10.3" letter-spacing="-0.45" fill="#080808" stroke="#080808" stroke-width="0.25">1</text></g>
<g transform="translate(571.9,342.3)"><path d="M0 22.8 Q-9.5 13 -13.2 6 A14.5 14.5 0 1 1 13.2 6 Q9.5 13 0 22.8 Z" fill="rgba(188,224,75,0.6)"/><circle r="8.7" fill="#fff" fill-opacity="0.7"/><circle r="7.7" fill="#fff"/><text y="3.6" x="-0.2" transform="scale(0.88,1)" text-anchor="middle" font-family="Liberation Sans, sans-serif" font-weight="bold" font-size="10.3" letter-spacing="-0.45" fill="#080808" stroke="#080808" stroke-width="0.25">1.6</text></g>
<g transform="translate(423.8,404.5)"><path d="M0 22.8 Q-9.5 13 -13.2 6 A14.5 14.5 0 1 1 13.2 6 Q9.5 13 0 22.8 Z" fill="rgba(250,242,15,0.6)"/><circle r="8.7" fill="#fff" fill-opacity="0.7"/><circle r="7.7" fill="#fff"/><text y="3.6" x="-0.2" transform="scale(0.88,1)" text-anchor="middle" font-family="Liberation Sans, sans-serif" font-weight="bold" font-size="10.3" letter-spacing="-0.45" fill="#080808" stroke="#080808" stroke-width="0.25">2.8</text></g>
<g transform="translate(437.4,395.5)"><path d="M0 22.8 Q-9.5 13 -13.2 6 A14.5 14.5 0 1 1 13.2 6 Q9.5 13 0 22.8 Z" fill="rgba(250,242,15,0.6)"/><circle r="8.7" fill="#fff" fill-opacity="0.7"/><circle r="7.7" fill="#fff"/><text y="3.6" x="-0.2" transform="scale(0.88,1)" text-anchor="middle" font-family="Liberation Sans, sans-serif" font-weight="bold" font-size="10.3" letter-spacing="-0.45" fill="#080808" stroke="#080808" stroke-width="0.25">2.4</text></g>
<g transform="translate(454.1,375.5)"><path d="M0 22.8 Q-9.5 13 -13.2 6 A14.5 14.5 0 1 1 13.2 6 Q9.5 13 0 22.8 Z" fill="rgba(250,242,15,0.6)"/><circle r="8.7" fill="#fff" fill-opacity="0.7"/><circle r="7.7" fill="#fff"/><text y="3.6" x="-0.2" transform="scale(0.88,1)" text-anchor="middle" font-family="Liberation Sans, sans-serif" font-weight="bold" font-size="10.3" letter-spacing="-0.45" fill="#080808" stroke="#080808" stroke-width="0.25">2.7</text></g>
<g transform="translate(445,364.7)"><path d="M0 22.8 Q-9.5 13 -13.2 6 A14.5 14.5 0 1 1 13.2 6 Q9.5 13 0 22.8 Z" fill="rgba(250,242,15,0.6)"/><circle r="8.7" fill="#fff" fill-opacity="0.7"/><circle r="7.7" fill="#fff"/><text y="3.6" x="-0.2" transform="scale(0.88,1)" text-anchor="middle" font-family="Liberation Sans, sans-serif" font-weight="bold" font-size="10.3" letter-spacing="-0.45" fill="#080808" stroke="#080808" stroke-width="0.25">2.5</text></g>
<g transform="translate(454.1,342.7)"><path d="M0 22.8 Q-9.5 13 -13.2 6 A14.5 14.5 0 1 1 13.2 6 Q9.5 13 0 22.8 Z" fill="rgba(214,158,16,0.6)"/><circle r="8.7" fill="#fff" fill-opacity="0.7"/><circle r="7.7" fill="#fff"/><text y="3.6" x="-0.2" transform="scale(0.88,1)" text-anchor="middle" font-family="Liberation Sans, sans-serif" font-weight="bold" font-size="10.3" letter-spacing="-0.45" fill="#080808" stroke="#080808" stroke-width="0.25">3.3</text></g>
<g transform="translate(486,308.5)"><path d="M0 22.8 Q-9.5 13 -13.2 6 A14.5 14.5 0 1 1 13.2 6 Q9.5 13 0 22.8 Z" fill="rgba(250,242,15,0.6)"/><circle r="8.7" fill="#fff" fill-opacity="0.7"/><circle r="7.7" fill="#fff"/><text y="3.6" x="-0.2" transform="scale(0.88,1)" text-anchor="middle" font-family="Liberation Sans, sans-serif" font-weight="bold" font-size="10.3" letter-spacing="-0.45" fill="#080808" stroke="#080808" stroke-width="0.25">2.6</text></g>
<g transform="translate(495.1,318.8)"><path d="M0 22.8 Q-9.5 13 -13.2 6 A14.5 14.5 0 1 1 13.2 6 Q9.5 13 0 22.8 Z" fill="rgba(250,242,15,0.6)"/><circle r="8.7" fill="#fff" fill-opacity="0.7"/><circle r="7.7" fill="#fff"/><text y="3.6" x="-0.2" transform="scale(0.88,1)" text-anchor="middle" font-family="Liberation Sans, sans-serif" font-weight="bold" font-size="10.3" letter-spacing="-0.45" fill="#080808" stroke="#080808" stroke-width="0.25">2.2</text></g>
<g transform="translate(512.3,328)"><path d="M0 22.8 Q-9.5 13 -13.2 6 A14.5 14.5 0 1 1 13.2 6 Q9.5 13 0 22.8 Z" fill="rgba(214,158,16,0.5)"/><circle r="8.7" fill="#fff" fill-opacity="0.7"/><circle r="7.7" fill="#fff"/><text y="3.6" x="-0.2" transform="scale(0.88,1)" text-anchor="middle" font-family="Liberation Sans, sans-serif" font-weight="bold" font-size="10.3" letter-spacing="-0.45" fill="#080808" stroke="#080808" stroke-width="0.25">3</text></g>
<g transform="translate(484.4,338)"><path d="M0 22.8 Q-9.5 13 -13.2 6 A14.5 14.5 0 1 1 13.2 6 Q9.5 13 0 22.8 Z" fill="rgba(250,242,15,0.6)"/><circle r="8.7" fill="#fff" fill-opacity="0.7"/><circle r="7.7" fill="#fff"/><text y="3.6" x="-0.2" transform="scale(0.88,1)" text-anchor="middle" font-family="Liberation Sans, sans-serif" font-weight="bold" font-size="10.3" letter-spacing="-0.45" fill="#080808" stroke="#080808" stroke-width="0.25">2.1</text></g>
<g transform="translate(516.2,340.7)"><path d="M0 22.8 Q-9.5 13 -13.2 6 A14.5 14.5 0 1 1 13.2 6 Q9.5 13 0 22.8 Z" fill="rgba(250,242,15,0.6)"/><circle r="8.7" fill="#fff" fill-opacity="0.7"/><circle r="7.7" fill="#fff"/><text y="3.6" x="-0.2" transform="scale(0.88,1)" text-anchor="middle" font-family="Liberation Sans, sans-serif" font-weight="bold" font-size="10.3" letter-spacing="-0.45" fill="#080808" stroke="#080808" stroke-width="0.25">2.7</text></g>
<g transform="translate(498.6,345.2)"><path d="M0 22.8 Q-9.5 13 -13.2 6 A14.5 14.5 0 1 1 13.2 6 Q9.5 13 0 22.8 Z" fill="rgba(250,242,15,0.6)"/><circle r="8.7" fill="#fff" fill-opacity="0.7"/><circle r="7.7" fill="#fff"/><text y="3.6" x="-0.2" transform="scale(0.88,1)" text-anchor="middle" font-family="Liberation Sans, sans-serif" font-weight="bold" font-size="10.3" letter-spacing="-0.45" fill="#080808" stroke="#080808" stroke-width="0.25">2.3</text></g>
<g transform="translate(519.1,358.9)"><path d="M0 22.8 Q-9.5 13 -13.2 6 A14.5 14.5 0 1 1 13.2 6 Q9.5 13 0 22.8 Z" fill="rgba(250,242,15,0.6)"/><circle r="8.7" fill="#fff" fill-opacity="0.7"/><circle r="7.7" fill="#fff"/><text y="3.6" x="-0.2" transform="scale(0.88,1)" text-anchor="middle" font-family="Liberation Sans, sans-serif" font-weight="bold" font-size="10.3" letter-spacing="-0.45" fill="#080808" stroke="#080808" stroke-width="0.25">2.2</text></g>
<g transform="translate(504.5,371)"><path d="M0 22.8 Q-9.5 13 -13.2 6 A14.5 14.5 0 1 1 13.2 6 Q9.5 13 0 22.8 Z" fill="rgba(250,242,15,0.6)"/><circle r="8.7" fill="#fff" fill-opacity="0.7"/><circle r="7.7" fill="#fff"/><text y="3.6" x="-0.2" transform="scale(0.88,1)" text-anchor="middle" font-family="Liberation Sans, sans-serif" font-weight="bold" font-size="10.3" letter-spacing="-0.45" fill="#080808" stroke="#080808" stroke-width="0.25">2.7</text></g>
<g transform="translate(540.5,388.5)"><path d="M0 22.8 Q-9.5 13 -13.2 6 A14.5 14.5 0 1 1 13.2 6 Q9.5 13 0 22.8 Z" fill="rgba(190,222,45,0.6)"/><circle r="8.7" fill="#fff" fill-opacity="0.7"/><circle r="7.7" fill="#fff"/><text y="3.6" x="-0.2" transform="scale(0.88,1)" text-anchor="middle" font-family="Liberation Sans, sans-serif" font-weight="bold" font-size="10.3" letter-spacing="-0.45" fill="#080808" stroke="#080808" stroke-width="0.25">1.6</text></g>
<g transform="translate(536.7,428.3)"><path d="M0 22.8 Q-9.5 13 -13.2 6 A14.5 14.5 0 1 1 13.2 6 Q9.5 13 0 22.8 Z" fill="rgba(225,232,28,0.6)"/><circle r="8.7" fill="#fff" fill-opacity="0.7"/><circle r="7.7" fill="#fff"/><text y="3.6" x="-0.2" transform="scale(0.88,1)" text-anchor="middle" font-family="Liberation Sans, sans-serif" font-weight="bold" font-size="10.3" letter-spacing="-0.45" fill="#080808" stroke="#080808" stroke-width="0.25">2.6</text></g>
<g transform="translate(583.3,333.9)"><path d="M0 22.8 Q-9.5 13 -13.2 6 A14.5 14.5 0 1 1 13.2 6 Q9.5 13 0 22.8 Z" fill="rgba(188,224,75,0.6)"/><circle r="8.7" fill="#fff" fill-opacity="0.7"/><circle r="7.7" fill="#fff"/><text y="3.6" x="-0.2" transform="scale(0.88,1)" text-anchor="middle" font-family="Liberation Sans, sans-serif" font-weight="bold" font-size="10.3" letter-spacing="-0.45" fill="#080808" stroke="#080808" stroke-width="0.25">0.3</text></g>
<g transform="translate(348.5,644.5)"><path d="M0 22.8 Q-9.5 13 -13.2 6 A14.5 14.5 0 1 1 13.2 6 Q9.5 13 0 22.8 Z" fill="rgba(214,158,16,0.6)"/><circle r="8.7" fill="#fff" fill-opacity="0.7"/><circle r="7.7" fill="#fff"/><text y="3.6" x="-0.2" transform="scale(0.88,1)" text-anchor="middle" font-family="Liberation Sans, sans-serif" font-weight="bold" font-size="10.3" letter-spacing="-0.45" fill="#080808" stroke="#080808" stroke-width="0.25">3.3</text></g>
<g transform="translate(561.2,349.3)"><path d="M0 22.8 Q-9.5 13 -13.2 6 A14.5 14.5 0 1 1 13.2 6 Q9.5 13 0 22.8 Z" fill="rgba(188,224,75,0.6)"/><circle r="8.7" fill="#fff" fill-opacity="0.7"/><circle r="7.7" fill="#fff"/><text y="3.6" x="-0.2" transform="scale(0.88,1)" text-anchor="middle" font-family="Liberation Sans, sans-serif" font-weight="bold" font-size="10.3" letter-spacing="-0.45" fill="#080808" stroke="#080808" stroke-width="0.25">1</text></g>
<circle cx="485.9" cy="360.2" r="6.8" fill="#f00"/>
<text x="533" y="331" font-family="DejaVu Sans, Liberation Sans, sans-serif" font-style="normal" font-size="9.6" letter-spacing="0" fill="#d6d6d6" stroke="#222" stroke-width="0.6" paint-order="stroke">Reykjavík</text>
</svg>

<div class="zoom"><div style="top:0;font-size:21px;line-height:28px;">+</div><div class="ln"></div><div style="top:28px;font-size:21px;line-height:27px;">&#8722;</div></div>
<div class="meas"><svg width="29" height="29" viewBox="0 0 29 29" fill="none" stroke="#d6d6d6" stroke-width="1.1" stroke-linecap="round" stroke-linejoin="round"><path d="M6.9 24.3 A12.1 12.1 0 0 1 23.8 6.9 Z"/><path d="M7.9 23.1 A10.6 10.6 0 0 1 22.7 7.9" stroke-dasharray="0.9 1.2" stroke-width="1.5" stroke-linecap="butt"/><path d="M8.2 18.8 A7.5 7.5 0 0 1 18.6 8 Z"/><path d="M10.7 23.9 L24.9 9.9"/><path d="M11 24.3 H25.1" stroke-width="1.4"/><path d="M16.8 24 L17.6 21.6 L18.6 24"/></svg></div>

<div class="btn" style="left:44px;width:73px;"><span style="left:13.25px;letter-spacing:-0.434px">Kort</span><svg style="left:50.2px;" width="9" height="5.6" viewBox="-1 -1 9 5.6" fill="none" stroke="#cfcfd2" stroke-width="1.4"><path d="M0 0 L3.5 3.6 L7 0"/></svg></div>
<div class="btn" style="left:123px;width:130.5px;"><span style="left:13.25px;letter-spacing:-0.357px">Skjálftamælar</span><svg style="left:107.5px;" width="9" height="5.6" viewBox="-1 -1 9 5.6" fill="none" stroke="#cfcfd2" stroke-width="1.4"><path d="M0 0 L3.5 3.6 L7 0"/></svg></div>
<div class="btn" style="left:258.5px;width:115.5px;"><span style="left:14.5px;letter-spacing:-0.936px">GPS mælar</span><svg style="left:92.19999999999999px;" width="9" height="5.6" viewBox="-1 -1 9 5.6" fill="none" stroke="#cfcfd2" stroke-width="1.4"><path d="M0 0 L3.5 3.6 L7 0"/></svg></div>
<div class="btn" style="left:379px;width:103px;"><span style="left:14.75px;letter-spacing:-0.579px">15 dagar</span><svg style="left:78px;" width="9" height="5.6" viewBox="-1 -1 9 5.6" fill="none" stroke="#cfcfd2" stroke-width="1.4"><path d="M0 0 L3.5 3.6 L7 0"/></svg></div>
<div class="btn" style="left:485.5px;width:102.5px;"><span style="left:14.5px;letter-spacing:-0.25px">Stillingar</span><svg style="left:78.0px;" width="9" height="5.6" viewBox="-1 -1 9 5.6" fill="none" stroke="#cfcfd2" stroke-width="1.4"><path d="M0 0 L3.5 3.6 L7 0"/></svg></div>
<div class="btn" style="left:592.5px;width:137.0px;"><span style="left:14.25px;letter-spacing:-0.468px">Stöðva uppfærslur</span></div>

<div id="dot"></div><div id="status" style="letter-spacing:-0.476px">GÖGN UPPFÆRAST SJÁLFKRAFA</div>

<div id="panel">
<h2 style="letter-spacing:-1.204px">SKJÁLFTAR S.L. 6 KLST (213)</h2>
<div class="hd" style="left:9px">TIMI</div><div class="hd" style="left:76px;letter-spacing:-0.671px">STÆRÐ</div><div class="hd" style="left:144px;letter-spacing:-0.472px">DÝPI</div><div class="hd" style="right:14px">VIÐV.SVÆÐI</div>
<div id="list">
<div class="row y"><span class="t">08:15:06</span><span class="m">2.6 <i>aM</i></span><span class="d">1.1 <i>km</i></span><span class="a"><b style="letter-spacing:-0.537px">Faxaflói</b></span></div>
<div class="row y"><span class="t">08:14:30</span><span class="m">1.9 <i>aM</i></span><span class="d">0.4 <i>km</i></span><span class="a"><b style="letter-spacing:-0.586px">Svartsengi</b></span></div>
<div class="row"><span class="t">08:14:07</span><span class="m">2.2 <i>aM</i></span><span class="d">3.0 <i>km</i></span><span class="a"><b style="letter-spacing:-0.586px">Svartsengi</b></span></div>
<div class="row y"><span class="t">08:13:47</span><span class="m">2.2 <i>aM</i></span><span class="d">2.4 <i>km</i></span><span class="a"><b style="letter-spacing:-0.586px">Svartsengi</b></span></div>
<div class="row y"><span class="t">08:13:19</span><span class="m">2 <i>aM</i></span><span class="d">2.8 <i>km</i></span><span class="a"><b style="letter-spacing:-0.586px">Svartsengi</b></span></div>
<div class="row"><span class="t">08:12:51</span><span class="m">2.2 <i>aM</i></span><span class="d">3.3 <i>km</i></span><span class="a"><b style="letter-spacing:-0.586px">Svartsengi</b></span></div>
<div class="row"><span class="t">08:12:34</span><span class="m">1.4 <i>aM</i></span><span class="d">3.2 <i>km</i></span><span class="a"><b style="letter-spacing:-0.586px">Svartsengi</b></span></div>
<div class="row"><span class="t">08:12:06</span><span class="m">1.6 <i>aM</i></span><span class="d">3.3 <i>km</i></span><span class="a"><b style="letter-spacing:-0.586px">Svartsengi</b></span></div>
<div class="row two"><span class="t">08:11:47</span><span class="m">2.3 <i>aM</i></span><span class="d">1.1 <i>km</i></span><span class="a"><b style="letter-spacing:-0.78px">Reykjanes-</b><b style="letter-spacing:-0.503px">hryggur</b></span></div>
<div class="row b"><span class="t">08:11:28</span><span class="m">4.2 <i>aM</i></span><span class="d">5.9 <i>km</i></span><span class="a"><b style="letter-spacing:-0.671px">Ísland</b></span></div>
<div class="row r b two"><span class="t">08:11:14</span><span class="m">4.6 <i>aM</i></span><span class="d">5.0 <i>km</i></span><span class="a" style="top:2.4px"><b style="letter-spacing:-0.771px">Utan VVS - Í</b><b style="letter-spacing:-0.611px">hafi</b></span></div>
<div class="row"><span class="t">08:10:39</span><span class="m">2.6 <i>aM</i></span><span class="d">3.8 <i>km</i></span><span class="a"><b style="letter-spacing:-0.586px">Svartsengi</b></span></div>
<div class="row"><span class="t">08:10:18</span><span class="m">1 <i>aM</i></span><span class="d">5.2 <i>km</i></span><span class="a" style="right:10.4px"><b style="letter-spacing:-0.412px">Brennisteinsfjöll</b></span></div>
<div class="row"><span class="t">08:09:53</span><span class="m">1.6 <i>aM</i></span><span class="d">3.6 <i>km</i></span><span class="a"><b style="letter-spacing:-0.586px">Svartsengi</b></span></div>
<div class="row"><span class="t">08:09:20</span><span class="m">1.2 <i>aM</i></span><span class="d">2.8 <i>km</i></span><span class="a"><b style="letter-spacing:-0.586px">Svartsengi</b></span></div>
<div class="row"><span class="t">08:09:00</span><span class="m">2.7 <i>aM</i></span><span class="d">1.1 <i>km</i></span><span class="a"><b style="letter-spacing:-0.59px">Suðurland</b></span></div>
<div class="row b"><span class="t">08:08:44</span><span class="m">3.6 <i>aM</i></span><span class="d">3.4 <i>km</i></span><span class="a"><b style="letter-spacing:-0.997px">Svartsengi</b></span></div>
<div class="row"><span class="t">08:07:59</span><span class="m">1.3 <i>aM</i></span><span class="d">3.8 <i>km</i></span><span class="a"><b style="letter-spacing:-0.586px">Svartsengi</b></span></div>
<div class="row"><span class="t">08:07:19</span><span class="m">2.5 <i>aM</i></span><span class="d">3.4 <i>km</i></span><span class="a"><b style="letter-spacing:-0.586px">Svartsengi</b></span></div>
<div class="row"><span class="t">08:07:08</span><span class="m">1.6 <i>aM</i></span><span class="d">1.1 <i>km</i></span><span class="a"><b style="letter-spacing:-0.586px">Svartsengi</b></span></div>
<div class="row"><span class="t">08:06:56</span><span class="m">2.5 <i>aM</i></span><span class="d">10.5 <i>km</i></span><span class="a"><b style="letter-spacing:-0.554px">Geirfuglasker</b></span></div>
<div class="row two"><span class="t">08:06:35</span><span class="m">2.7 <i>aM</i></span><span class="d">1.1 <i>km</i></span><span class="a"><b style="letter-spacing:-0.78px">Reykjanes-</b><b style="letter-spacing:-0.503px">hryggur</b></span></div>
<div class="row"><span class="t">08:06:24</span><span class="m">1.9 <i>aM</i></span><span class="d">1.1 <i>km</i></span><span class="a"><b style="letter-spacing:-0.808px">Reykjanes</b></span></div>
<div class="row"><span class="t">08:05:56</span><span class="m">0.9 <i>aM</i></span><span class="d">1.1 <i>km</i></span><span class="a"><b style="letter-spacing:-0.586px">Svartsengi</b></span></div>
<div class="row"><span class="t">08:05:22</span><span class="m">1.6 <i>aM</i></span><span class="d">3.4 <i>km</i></span><span class="a"><b style="letter-spacing:-0.586px">Svartsengi</b></span></div>
</div>
</div>
<div class="btn" style="left:734.5px;width:73.0px;"><span style="left:13.799999999999955px;letter-spacing:-0.503px">English</span></div>

<div class="lbl" style="left:6px;letter-spacing:-0.588px">Svæði</div>
<div class="lbl" style="left:160.5px;letter-spacing:-0.209px">Stærð</div>
<div class="lbl" style="left:242.5px;letter-spacing:0.105px">Mesta dýpi</div>
<div class="lbl" style="left:331px;letter-spacing:-0.203px">Tími</div>
<div class="sel" style="left:6px;width:147.5px;"><span style="left:11px;letter-spacing:-0.052px">Norður-Atlantshaf</span><svg style="left:123px;" width="12" height="7" viewBox="-1 -1 12 7" fill="none" stroke="#c8c8ca" stroke-width="1.3"><path d="M0 0 L5.0 5 L10 0"/></svg></div>
<div class="sel" style="left:161px;width:74.5px;"><span style="left:10.5px;letter-spacing:-0.441px">&gt; M0</span><svg style="left:50px;" width="12" height="7" viewBox="-1 -1 12 7" fill="none" stroke="#c8c8ca" stroke-width="1.3"><path d="M0 0 L5.0 5 L10 0"/></svg></div>
<div class="sel" style="left:243px;width:80.5px;"><span style="left:10px;letter-spacing:-0.081px">25 km</span><svg style="left:57px;" width="12" height="7" viewBox="-1 -1 12 7" fill="none" stroke="#c8c8ca" stroke-width="1.3"><path d="M0 0 L5.0 5 L10 0"/></svg></div>
<div class="sel" style="left:332px;width:76px;"><span style="left:10px;letter-spacing:-0.057px">6 klst</span><svg style="left:51px;" width="12" height="7" viewBox="-1 -1 12 7" fill="none" stroke="#c8c8ca" stroke-width="1.3"><path d="M0 0 L5.0 5 L10 0"/></svg></div>

<div id="gnss" style="letter-spacing:-0.123px">GNSS/GPS Viewer BETA</div>
<div id="foot"><span style="letter-spacing:0.036px">Þessi þjónusta mun hætta innan tíðar, upplýsingar um jarðskjálfta má finna hjá <u>Veðurstofunni</u></span><br><span style="letter-spacing:-0.024px">Þessi vefur notar gögn frá Veðurstofu Íslands, LMÍ, NÍ o.fl. • Gögnin eru ekki endilega áreiðanleg • Hreinn Beck</span></div>
</body></html>
